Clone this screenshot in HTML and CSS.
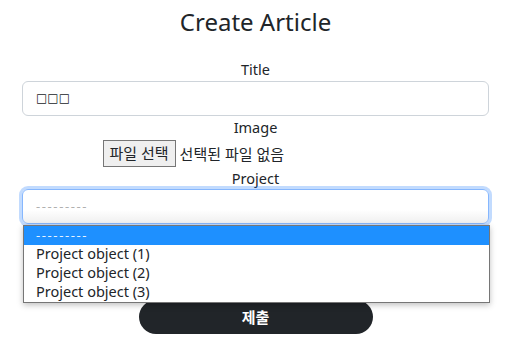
FILE: index.html
```html
<!DOCTYPE html>
<html lang="ko">
<head>
    <meta charset="UTF-8">
    <meta name="viewport" content="width=device-width, initial-scale=1.0">
    <title>Create Article</title>
    <link rel="stylesheet" href="styles.css">
</head>
<body>
    <div class="container">
        <h1>Create Article</h1>

        <form class="article-form">
            <label class="form-label">Title</label>
            <div class="form-control">□□□</div>

            <label class="form-label">Image</label>
            <div class="file-row">
                <span class="file-btn">파일 선택</span>
                <span class="file-name">선택된 파일 없음</span>
            </div>

            <label class="form-label">Project</label>
            <div class="select-wrap">
                <div class="form-control form-select focused"><span class="placeholder">---------</span></div>
                <ul class="select-menu">
                    <li class="option active"><span class="dashes">---------</span></li>
                    <li class="option">Project object (1)</li>
                    <li class="option">Project object (2)</li>
                    <li class="option">Project object (3)</li>
                </ul>
            </div>

            <div class="submit-row">
                <span class="submit-btn">제출</span>
            </div>
        </form>
    </div>
</body>
</html>
```

FILE: styles.css
```css
body {
    margin: 0;
    font-family: "Noto Sans", "Noto Sans CJK KR", sans-serif;
    color: #212529;
    background-color: white;
}
.container {
    width: 467px;
    margin-left: 22px;
    text-align: center;
}
h1 {
    font-size: 24px;
    font-weight: 400;
    line-height: 34px;
    margin: 5px 0 19px;
}
.article-form {
    display: flex;
    flex-direction: column;
}
.form-label {
    font-size: 14.5px;
    line-height: 23px;
}
.form-control {
    box-sizing: border-box;
    height: 35px;
    padding: 0 13px;
    border: 1px solid #ced4da;
    border-radius: 6px;
    text-align: left;
    font-size: 12px;
    line-height: 33px;
    font-family: "DejaVu Sans", sans-serif;
}
.file-row {
    width: 306px;
    margin: 1px auto 0;
    display: flex;
    align-items: center;
    gap: 4px;
    font-size: 15px;
    height: 27px;
}
.file-btn {
    box-sizing: border-box;
    height: 27px;
    line-height: 25px;
    padding: 0 6px;
    background-color: #efefef;
    border: 1px solid #767676;
}
.select-wrap {
    position: relative;
    margin-top: -1px;
}
.form-select.focused {
    border-color: #86b7fe;
    box-shadow: 0 0 0 3px rgba(13, 110, 253, 0.25);
    background: linear-gradient(#fff 60%, #f0f0f0);
}
.placeholder, .dashes {
    font-size: 13px;
    letter-spacing: 1.6px;
    font-family: "Noto Sans", sans-serif;
}
.placeholder {
    color: #b0b0b0;
}
.select-menu {
    position: absolute;
    top: 36px;
    left: 1px;
    width: 467px;
    box-sizing: border-box;
    margin: 0;
    padding: 0;
    list-style: none;
    background-color: white;
    border: 1px solid #767676;
    box-shadow: 0 2px 6px rgba(0, 0, 0, 0.25);
    z-index: 2;
    text-align: left;
}
.option {
    padding: 0 12px;
    font-size: 14.5px;
    line-height: 17px;
    height: 19px;
}
.option.active {
    background-color: #1e90ff;
    color: #e8f3ff;
}
.submit-row {
    margin-top: 76px;
    display: flex;
    justify-content: center;
}
.submit-btn {
    width: 234px;
    height: 34px;
    line-height: 34px;
    border-radius: 17px;
    background-color: #212529;
    color: white;
    font-weight: 700;
    font-size: 15px;
}
```
